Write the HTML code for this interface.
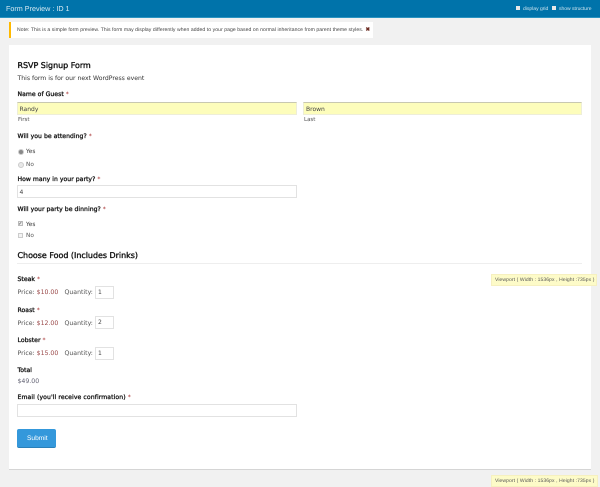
<!DOCTYPE html>
<html><head><meta charset="utf-8"><style>
html,body{margin:0;padding:0;width:600px;height:487px;overflow:hidden;background:#f1f1f1}
body{font-family:"DejaVu Sans",sans-serif;color:#333;text-rendering:geometricPrecision}
#w{position:absolute;left:0;top:0;width:600px;height:487px;filter:blur(.25px)}
.t,.b{position:absolute;white-space:nowrap}
.t{line-height:10px;font-size:6.13px;margin-top:1px}
.l{color:#111;font-size:6.13px;letter-spacing:.03px;-webkit-text-stroke:.3px #111}
.l i{font-style:normal;color:#a02020;-webkit-text-stroke:0}
.i{position:absolute;box-sizing:border-box;background:#fff;border:1px solid #e2e2e2}
.s{color:#555}
.p{color:#555;font-size:6.2px}
.p b{font-weight:normal;color:#9b4a4a}
.h{color:#111;-webkit-text-stroke:.35px #111}
.tip{position:absolute;box-sizing:border-box;background:#fdfbc8;border:1px solid #f6f0c0;font:5px/10px "Liberation Sans",sans-serif;color:#555;padding-left:3px;white-space:nowrap;letter-spacing:.1px}
</style></head><body><div id="w">
<div class="b" style="left:0;top:0;width:600px;height:18px;background:#0073aa;border-bottom:1px solid #2a93c0;box-sizing:border-box"></div>
<div class="t" style="left:6px;top:3px;color:#d5e9f2;font:7.2px/10px 'Liberation Sans',sans-serif">Form Preview : ID 1</div>
<div class="b" style="left:516px;top:6px;width:4px;height:4px;background:#e8e8e8"></div>
<div class="t" style="left:523px;top:3px;color:#cfe5ef;font:5px/10px 'Liberation Sans',sans-serif">display grid</div>
<div class="b" style="left:552px;top:6px;width:4px;height:4px;background:#e8e8e8"></div>
<div class="t" style="left:559px;top:3px;color:#cfe5ef;font:5px/10px 'Liberation Sans',sans-serif">show structure</div>

<div class="b" style="left:9px;top:22px;width:364px;height:16px;background:#fff;border-left:2px solid #ffb900;box-sizing:border-box"></div>
<div class="t" style="left:17px;top:24px;font:5.07px/10px 'Liberation Sans',sans-serif;color:#444;letter-spacing:.07px">Note: This is a simple form preview. This form may display differently when added to your page based on normal inheritance from parent theme styles.</div>
<div class="t" style="left:365.5px;top:24px;font:bold 5.5px/10px 'Liberation Sans',sans-serif;color:#6b2a20">✖</div>

<div class="b" style="left:9px;top:45px;width:582px;height:425px;background:#fff;border-bottom:1px solid #d5d5d5;box-sizing:border-box"></div>

<div class="t h" style="left:17.5px;top:60px;font-size:7.95px">RSVP Signup Form</div>
<div class="t" style="left:17.5px;top:73px;color:#333">This form is for our next WordPress event</div>

<div class="t l" style="left:17.5px;top:89px">Name of Guest <i>*</i></div>
<div class="b" style="left:17px;top:102px;width:280px;height:13px;background:#fdfdbb;border:1px solid #eeeed8;border-top:1px solid #c8c8b0;box-sizing:border-box"></div>
<div class="t" style="left:19.5px;top:103.5px;font-size:6px;color:#444">Randy</div>
<div class="t s" style="left:18px;top:113.5px;font-size:5.5px">First</div>
<div class="b" style="left:303px;top:102px;width:279px;height:13px;background:#fdfdbb;border:1px solid #eeeed8;border-top:1px solid #c8c8b0;box-sizing:border-box"></div>
<div class="t" style="left:306px;top:103.5px;font-size:6px;color:#444">Brown</div>
<div class="t s" style="left:304px;top:113.5px;font-size:5.5px">Last</div>

<div class="t l" style="left:17.5px;top:131px">Will you be attending? <i>*</i></div>
<div class="b" style="left:18px;top:149px;width:4px;height:4px;border-radius:50%;background:#888;border:1px solid #ccc"></div>
<div class="t" style="left:26px;top:146px;font-size:5.8px;color:#333">Yes</div>
<div class="b" style="left:18px;top:162px;width:4px;height:4px;border-radius:50%;background:#e8e8e8;border:1px solid #ccc"></div>
<div class="t" style="left:26px;top:158.5px;font-size:5.8px;color:#555">No</div>

<div class="t l" style="left:17.5px;top:174px">How many in your party? <i>*</i></div>
<div class="i" style="left:17px;top:185px;width:280px;height:13px"></div>
<div class="t" style="left:19.5px;top:186.5px;font-size:6px;color:#444">4</div>

<div class="t l" style="left:17.5px;top:204px">Will your party be dinning? <i>*</i></div>
<div class="b" style="left:18px;top:221px;width:5px;height:5px;background:#eee;border:1px solid #bbb;box-sizing:border-box"></div>
<div class="t" style="left:18.3px;top:218px;font-size:5px;color:#333">✓</div>
<div class="t" style="left:26px;top:218.5px;font-size:5.8px;color:#333">Yes</div>
<div class="b" style="left:18px;top:233px;width:5px;height:5px;background:#f4f4f4;border:1px solid #ccc;box-sizing:border-box"></div>
<div class="t" style="left:26px;top:230px;font-size:5.8px;color:#555">No</div>

<div class="t h" style="left:17.5px;top:249.5px;font-size:7.95px">Choose Food (Includes Drinks)</div>
<div class="b" style="left:17px;top:263px;width:565px;height:1px;background:#eee"></div>

<div class="t l" style="left:17.5px;top:274px">Steak <i>*</i></div>
<div class="t p" style="left:17.5px;top:287px">Price: <b>$10.00</b></div>
<div class="t p" style="left:64.5px;top:287px">Quantity:</div>
<div class="i" style="left:95px;top:286px;width:19px;height:13px"></div>
<div class="t" style="left:98px;top:287px;font-size:6px;color:#444">1</div>

<div class="t l" style="left:17.5px;top:304.5px">Roast <i>*</i></div>
<div class="t p" style="left:17.5px;top:317.5px">Price: <b>$12.00</b></div>
<div class="t p" style="left:64.5px;top:317.5px">Quantity:</div>
<div class="i" style="left:95px;top:316px;width:19px;height:13px"></div>
<div class="t" style="left:98px;top:317px;font-size:6px;color:#444">2</div>

<div class="t l" style="left:17.5px;top:335px">Lobster <i>*</i></div>
<div class="t p" style="left:17.5px;top:348px">Price: <b>$15.00</b></div>
<div class="t p" style="left:64.5px;top:348px">Quantity:</div>
<div class="i" style="left:95px;top:347px;width:19px;height:13px"></div>
<div class="t" style="left:98px;top:348px;font-size:6px;color:#444">1</div>

<div class="t l" style="left:17.5px;top:365px">Total</div>
<div class="t" style="left:17.5px;top:375.5px;font-size:6.2px;color:#667">$49.00</div>

<div class="t l" style="left:17.5px;top:391.5px;letter-spacing:.09px">Email (you'll receive confirmation) <i>*</i></div>
<div class="i" style="left:17px;top:404px;width:280px;height:13px"></div>

<div class="b" style="left:17px;top:429px;width:39px;height:19px;background:#3498db;border-bottom:1px solid #2a80b9;border-radius:2px;box-sizing:border-box"></div>
<div class="t" style="left:27px;top:432.5px;font:6.6px/10px 'Liberation Sans',sans-serif;color:#fff">Submit</div>

<div class="tip" style="left:491px;top:274px;width:106px;height:12px">Viewport ( Width : 1536px , Height :735px )</div>
<div class="tip" style="left:491px;top:475px;width:107px;height:12px">Viewport ( Width : 1536px , Height :735px )</div>
</div></body></html>
